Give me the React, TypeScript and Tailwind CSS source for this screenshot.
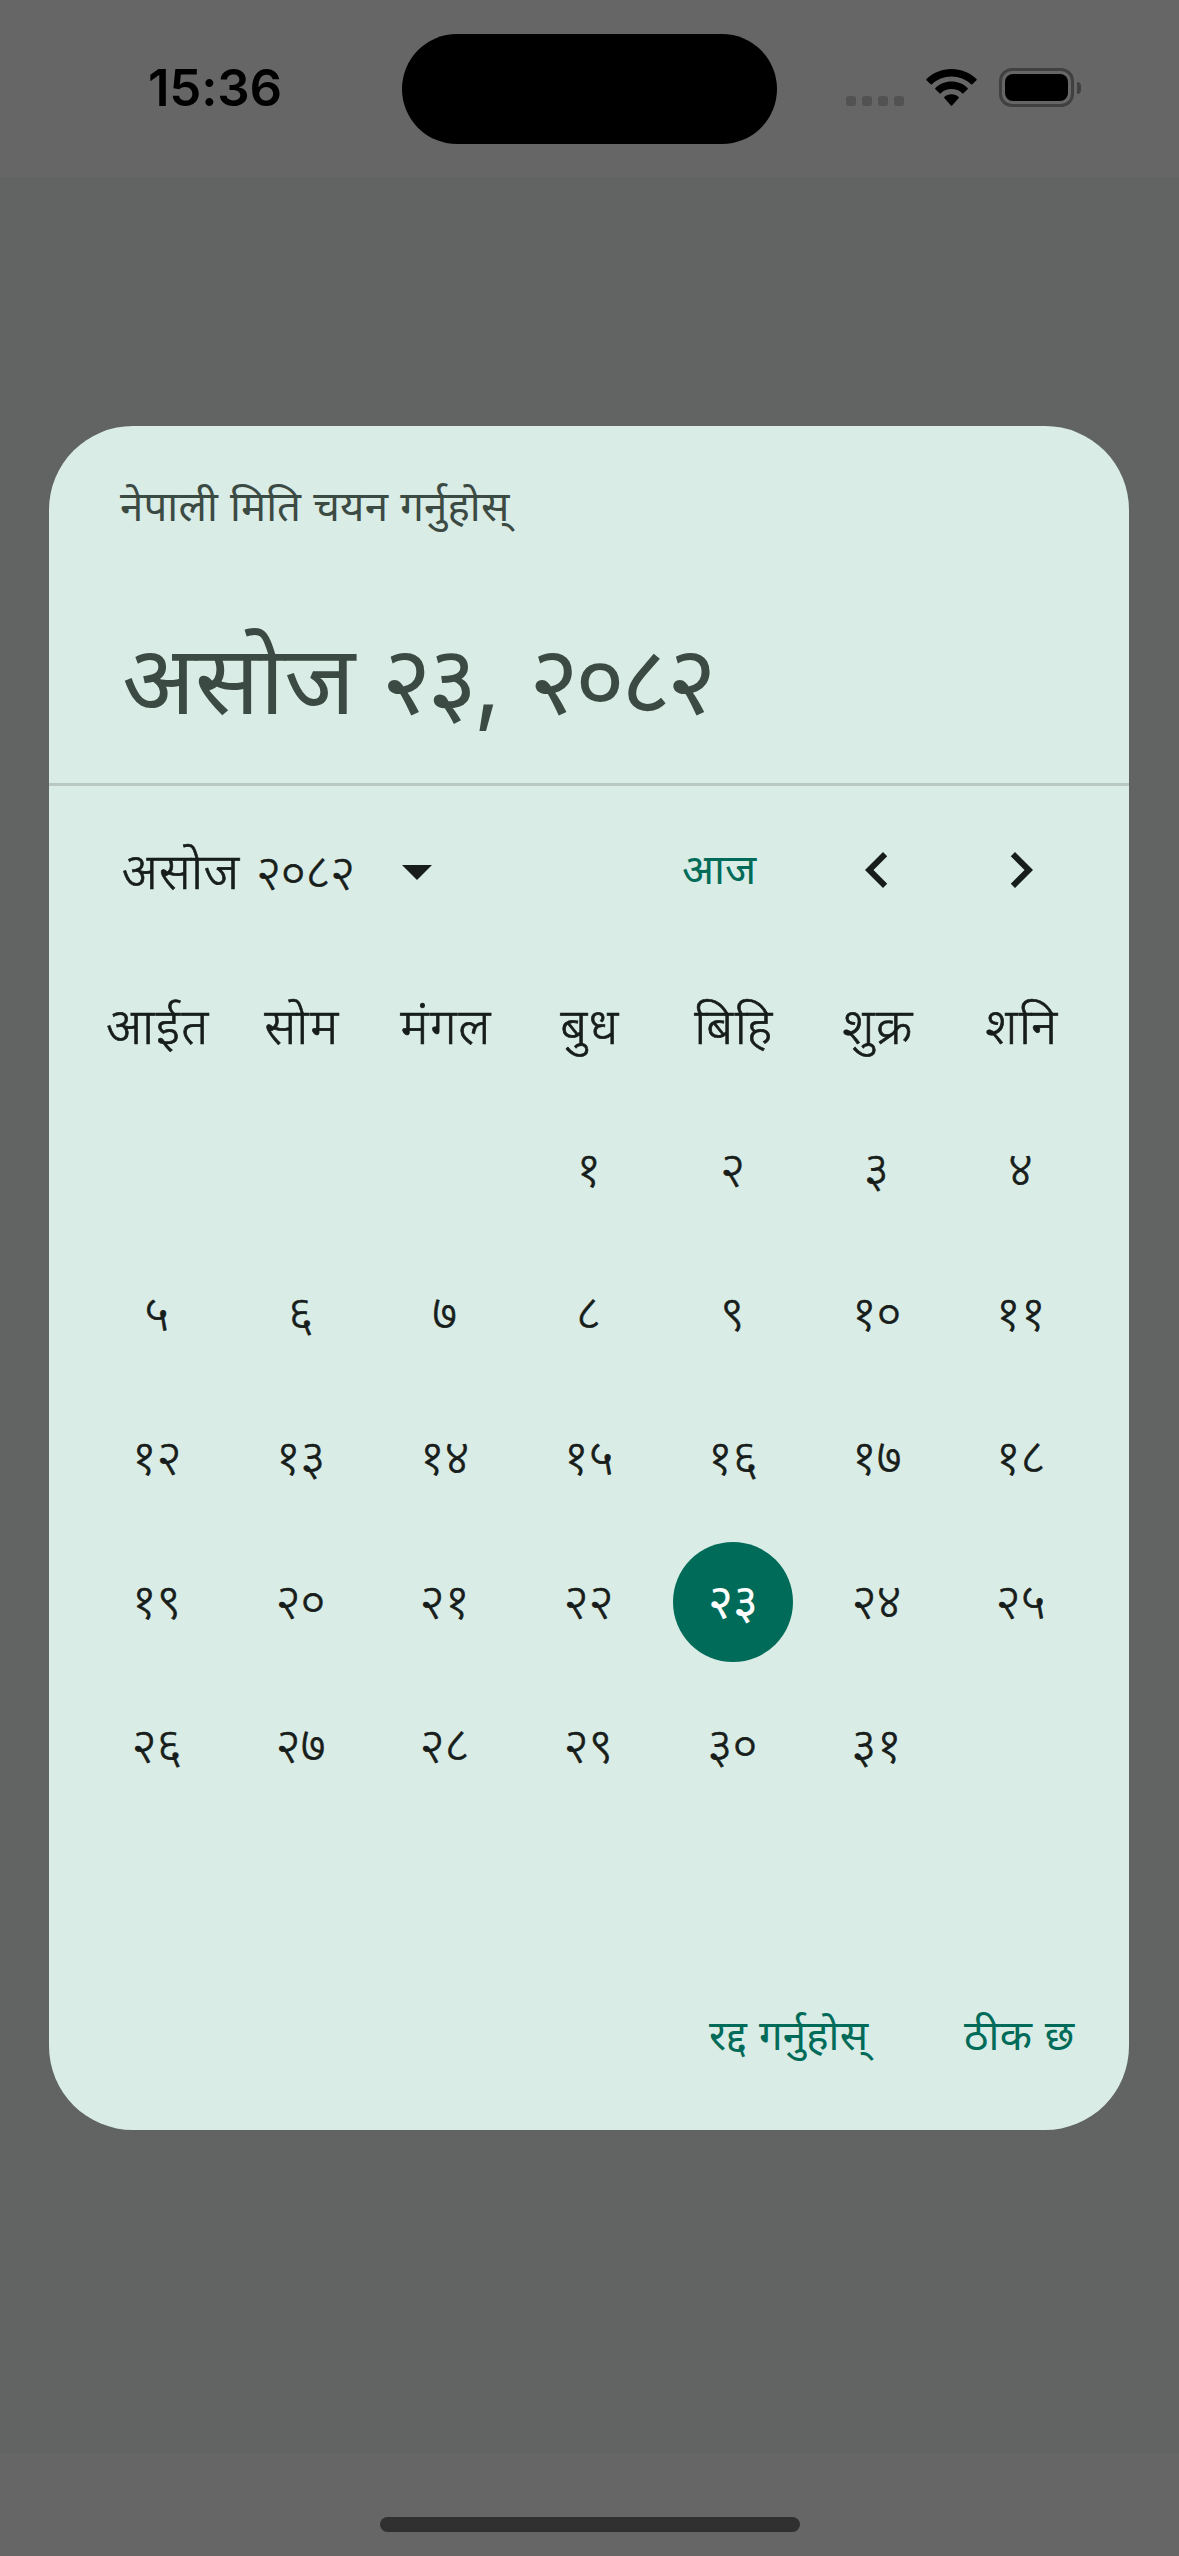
import React from 'react';

const weekdays = ['आईत', 'सोम', 'मंगल', 'बुध', 'बिहि', 'शुक्र', 'शनि'];
const digits = '०१२३४५६७८९';
const toNepali = (n: number) => String(n).split('').map((d) => digits[Number(d)]).join('');
const cells: number[] = Array.from({ length: 42 }, (_, i) => (i >= 3 && i < 34 ? i - 2 : 0));
const selectedDay = 23;

function StatusBar() {
  return (
    <header className="flex h-[177px] shrink-0 items-start bg-[#666666] text-black">
      <div className="w-[402px] shrink-0 pt-[58px] pl-[148px] text-[51px] leading-[60px] font-semibold tracking-[-0.2px]">
        <span>15:36</span>
      </div>
      <div className="mt-[34px] h-[110px] w-[375px] shrink-0 rounded-full bg-black" />
      <div className="mt-[68px] ml-[69px] flex h-[39px] items-start">
        <div className="mt-[28px] flex gap-[6px]">
          {[0, 1, 2, 3].map((i) => (
            <div key={i} className="size-[10px] rounded-[3px] bg-[#525252]" />
          ))}
        </div>
        <svg className="mt-px ml-[22px] h-[37px] w-[51px]" viewBox="0 0 51 37" fill="#000">
          <path d="M25.5 0C35.200 0 44 3.700 50.500 10.100Q51 10.700 50.500 11.300L46.300 15.300Q45.700 15.800 45.100 15.300C40 10.400 33 7.500 25.500 7.500S11 10.400 5.900 15.300Q5.300 15.800 4.700 15.300L.5 11.300Q0 10.700 .5 10.100C7 3.700 15.800 0 25.500 0Z" />
          <path d="M25.500 12.600C31.800 12.600 37.400 15 41.600 19Q42.200 19.600 41.600 20.200L37.400 24.200Q36.800 24.700 36.200 24.200C33.400 21.600 29.600 20.100 25.500 20.100S17.600 21.600 14.800 24.200Q14.200 24.700 13.600 24.200L9.400 20.200Q8.800 19.600 9.400 19C13.600 15 19.200 12.600 25.500 12.600Z" />
          <path d="M25.500 25.200C28.300 25.200 30.800 26.200 32.700 27.900Q33.300 28.500 32.700 29.100L26.100 36.500Q25.500 37 24.900 36.500L18.300 29.100Q17.700 28.500 18.300 27.900C20.200 26.200 22.700 25.200 25.500 25.200Z" />
        </svg>
        <div className="ml-[22px] flex items-center">
          <div className="h-[39px] w-[75px] rounded-[13px] border-[3px] border-[#404040] p-[3px]">
            <div className="h-full w-full rounded-[8px] bg-black" />
          </div>
          <div className="ml-[3px] h-[12px] w-[4px] rounded-r-full bg-[#404040]" />
        </div>
      </div>
    </header>
  );
}

function DialogHeader() {
  return (
    <div className="h-[360px] shrink-0 border-b-[3px] border-[#b9c8c1] px-[71px] whitespace-nowrap text-[#3c4a44]">
      <div className="pt-[48px] text-[42px] leading-[63px] tracking-[0.2px]">
        <span>नेपाली मिति चयन गर्नुहोस्</span>
      </div>
      <div className="flex pt-[70px] pl-[2px] text-[96px] leading-[144px]">
        <span className="tracking-[-0.6px]">असोज</span>
        <span className="ml-[27px] tracking-[-4px]">२३,</span>
        <span className="ml-[32px] tracking-[-4px]">२०८२</span>
      </div>
    </div>
  );
}

function MonthBar() {
  return (
    <div className="flex h-[168px] shrink-0 items-center pl-[72px] text-[48px] whitespace-nowrap">
      <button className="flex w-[332px] items-center justify-between font-light [-webkit-text-stroke:0.7px]">
        <span className="flex items-baseline gap-[16px] pt-[2px] pl-px">
          <span className="text-[50px] tracking-[1px]">असोज</span>
          <span className="tracking-[-0.3px]">२०८२</span>
        </span>
        <svg className="mt-px size-[72px]" viewBox="0 0 24 24" fill="#171d1a">
          <path d="M7 10l5 5 5-5z" />
        </svg>
      </button>
      <button className="ml-[229px] w-[75px] pb-[4px] text-left text-[42px] text-[#006b58]">आज</button>
      <svg className="ml-[84px] size-[72px]" viewBox="0 0 24 24" fill="#171d1a">
        <path d="M15.410 7.410L14 6l-6 6 6 6 1.410-1.410L10.830 12z" />
      </svg>
      <svg className="ml-[72px] size-[72px]" viewBox="0 0 24 24" fill="#171d1a">
        <path d="M10 6L8.590 7.410 13.170 12l-4.580 4.590L10 18l6-6z" />
      </svg>
    </div>
  );
}

function Calendar() {
  return (
    <div className="grid shrink-0 grid-cols-7 px-[36px] text-center text-[48px] leading-[70px] font-light [-webkit-text-stroke:0.7px]">
      {weekdays.map((w) => (
        <div key={w} className="flex h-[144px] items-center justify-center pl-[2px] text-[50px] tracking-[1.5px]">{w}</div>
      ))}
      {cells.map((day, i) => (
        <div key={i} className="flex h-[144px] items-center justify-center">
          {day === selectedDay ? (
            <span className="flex size-[120px] items-center justify-center rounded-full bg-[#006b58] pb-[2px] font-normal text-white [-webkit-text-stroke:0px]">{toNepali(day)}</span>
          ) : day ? (
            <span className="pr-px pb-[2px]">{toNepali(day)}</span>
          ) : null}
        </div>
      ))}
    </div>
  );
}

export default function App() {
  return (
    <div className="flex h-[2556px] w-[1179px] flex-col overflow-hidden bg-[#616462] font-[Inter,'Noto_Sans','Noto_Sans_Devanagari',sans-serif]">
      <StatusBar />
      <main className="flex flex-1 flex-col px-[49px] pt-[249px]">
        <section className="flex h-[1704px] w-[1080px] flex-col rounded-[84px] bg-[#d9ece5] text-[#171d1a]">
          <DialogHeader />
          <MonthBar />
          <Calendar />
          <div className="mt-[24px] flex h-[96px] items-center pl-[660px] text-[42px] whitespace-nowrap text-[#006b58]">
            <button className="w-[255px] text-left tracking-[0.2px]">रद्द गर्नुहोस्</button>
            <button className="tracking-[0.5px]">ठीक छ</button>
          </div>
        </section>
      </main>
      <footer className="flex h-[102px] shrink-0 justify-center bg-[#666666] pt-[63px]">
        <div className="h-[15px] w-[420px] rounded-full bg-[#303030]" />
      </footer>
    </div>
  );
}
